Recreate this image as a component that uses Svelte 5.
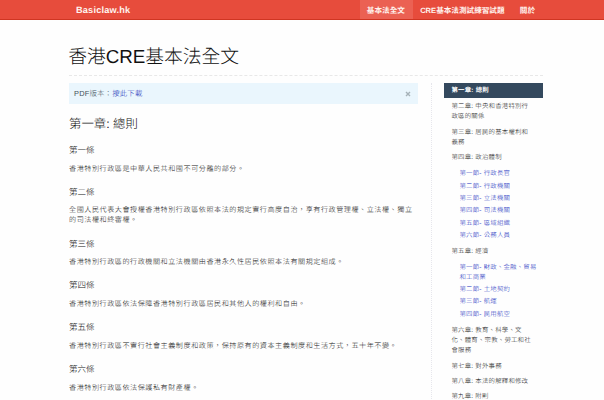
<script>
  const articles = [
    ['第一條', ['香港特別行政區是中華人民共和國不可分離的部分。']],
    ['第二條', ['全國人民代表大會授權香港特別行政區依照本法的規定實行高度自治，享有行政管理權、立法權、獨立', '的司法權和終審權。']],
    ['第三條', ['香港特別行政區的行政機關和立法機關由香港永久性居民依照本法有關規定組成。']],
    ['第四條', ['香港特別行政區依法保障香港特別行政區居民和其他人的權利和自由。']],
    ['第五條', ['香港特別行政區不實行社會主義制度和政策，保持原有的資本主義制度和生活方式，五十年不變。']],
    ['第六條', ['香港特別行政區依法保護私有財產權。']]
  ];
  const chapters = [
    { lines: ['第一章: 總則'], active: true },
    { lines: ['第二章: 中央和香港特別行', '政區的關係'] },
    { lines: ['第三章: 居民的基本權利和', '義務'] },
    {
      lines: ['第四章: 政治體制'],
      sections: [['第一節- 行政長官'], ['第二節- 行政機關'], ['第三節- 立法機關'], ['第四節- 司法機關'], ['第五節- 區域組織'], ['第六節- 公務人員']]
    },
    {
      lines: ['第五章: 經濟'],
      sections: [['第一節- 財政、金融、貿易', '和工商業'], ['第二節- 土地契約'], ['第三節- 航運'], ['第四節- 民用航空']]
    },
    { lines: ['第六章: 教育、科學、文', '化、體育、宗教、勞工和社', '會服務'] },
    { lines: ['第七章: 對外事務'] },
    { lines: ['第八章: 本法的解釋和修改'] },
    { lines: ['第九章: 附則'] }
  ];
</script>

<div class="page" lang="zh-Hant">
  <header>
    <a class="brand" href="#top">Basiclaw.hk</a>
    <nav>
      <a class="current" href="#law">基本法全文</a>
      <a href="#test">CRE基本法測試練習試題</a>
      <a href="#about">關於</a>
    </nav>
  </header>
  <div class="container">
    <h1>香港CRE基本法全文</h1>
    <div class="columns">
      <main>
        <div class="notice">
          <span>PDF版本：<a href="#pdf">按此下載</a></span>
          <button aria-label="關閉">
            <svg viewBox="0 0 6 6"><path d="M1 1l4 4M5 1l-4 4" /></svg>
          </button>
        </div>
        <h2>第一章: 總則</h2>
        {#each articles as [title, lines]}
          <article>
            <h3>{title}</h3>
            <p>{#each lines as line}<span>{line}</span>{/each}</p>
          </article>
        {/each}
      </main>
      <aside>
        {#each chapters as chapter}
          <a class="chapter" class:active={chapter.active} href="#chapter">
            {#each chapter.lines as line}<span>{line}</span>{/each}
          </a>
          {#if chapter.sections}
            <ul>
              {#each chapter.sections as section}
                <li><a href="#section">{#each section as line}<span>{line}</span>{/each}</a></li>
              {/each}
            </ul>
          {/if}
        {/each}
      </aside>
    </div>
  </div>
</div>

<style>
  :global(body) { margin: 0; background: #fefefe; }
  .page {
    height: 400px;
    overflow: hidden;
    font-family: "Liberation Sans", "Noto Sans CJK TC", sans-serif;
    font-weight: 300;
    color: #151515;
    text-rendering: geometricPrecision;
    white-space: nowrap;
  }
  a { color: inherit; text-decoration: none; }
  header {
    box-sizing: border-box;
    height: 20px;
    padding: 0 61px 0 76px;
    display: flex;
    justify-content: space-between;
    background: #e74c3c;
    border-bottom: 1px solid #cf3522;
    color: #fff3ee;
    font-weight: 700;
    line-height: 20px;
  }
  .brand { font-size: 9.2px; letter-spacing: 0.18px; }
  nav { display: flex; font-size: 7.6px; }
  nav a { padding: 0 8px 0 7.3px; line-height: 21px; height: 19px; }
  .current { background: #eb6153; }
  .container { padding: 0 61px 0 69px; }
  h1, h2, h3, p, ul { margin: 0; padding: 0; font-weight: 300; }
  h1 {
    box-sizing: border-box;
    height: 56px;
    padding-top: 22px;
    border-bottom: 1px dashed #e8e8e8;
    font-size: 18.8px;
    line-height: 30px;
    letter-spacing: -0.05px;
    text-indent: -0.7px;
    color: #111;
  }
  .columns { display: flex; padding-top: 7px; }
  main {
    box-sizing: border-box;
    width: 363px;
    height: 330px;
    padding-right: 13px;
    border-right: 1px dotted #e6e6ec;
  }
  .notice {
    display: flex;
    justify-content: space-between;
    align-items: center;
    height: 21px;
    padding: 0 7px 0 5px;
    background: #eaf6fd;
    color: #435159;
    font-size: 7.4px;
    letter-spacing: 0.2px;
  }
  .notice a { color: #2030b8; }
  button { display: flex; padding: 0; border: 0; background: none; }
  svg { width: 6px; height: 6px; }
  path { fill: none; stroke: #a6b2b8; stroke-width: 1.4; }
  h2 {
    margin-top: 10px;
    font-size: 12.4px;
    line-height: 20px;
    color: #111;
  }
  h3 { padding-top: 9px; font-size: 8.5px; line-height: 14px; color: #111; }
  p {
    padding: 6.7px 0 2.1px;
    font-size: 7.1px;
    letter-spacing: 0.54px;
    line-height: 10px;
  }
  p span, aside span { display: block; }
  aside {
    width: 99px;
    margin-left: 12px;
    font-size: 6.4px;
    letter-spacing: 0.22px;
    line-height: 10.2px;
  }
  .chapter { display: block; padding: 2.6px 0 2.6px 7.5px; }
  .chapter.active { background: #34495e; color: #fff; font-weight: 700; padding: 3.4px 0 1.8px 7.5px; }
  .chapter.active + .chapter { padding-top: 3.9px; }
  ul { padding: 2px 0 2.2px 15.5px; list-style: none; color: #2030c0; }
  li { padding: 1.05px 0; }
</style>
